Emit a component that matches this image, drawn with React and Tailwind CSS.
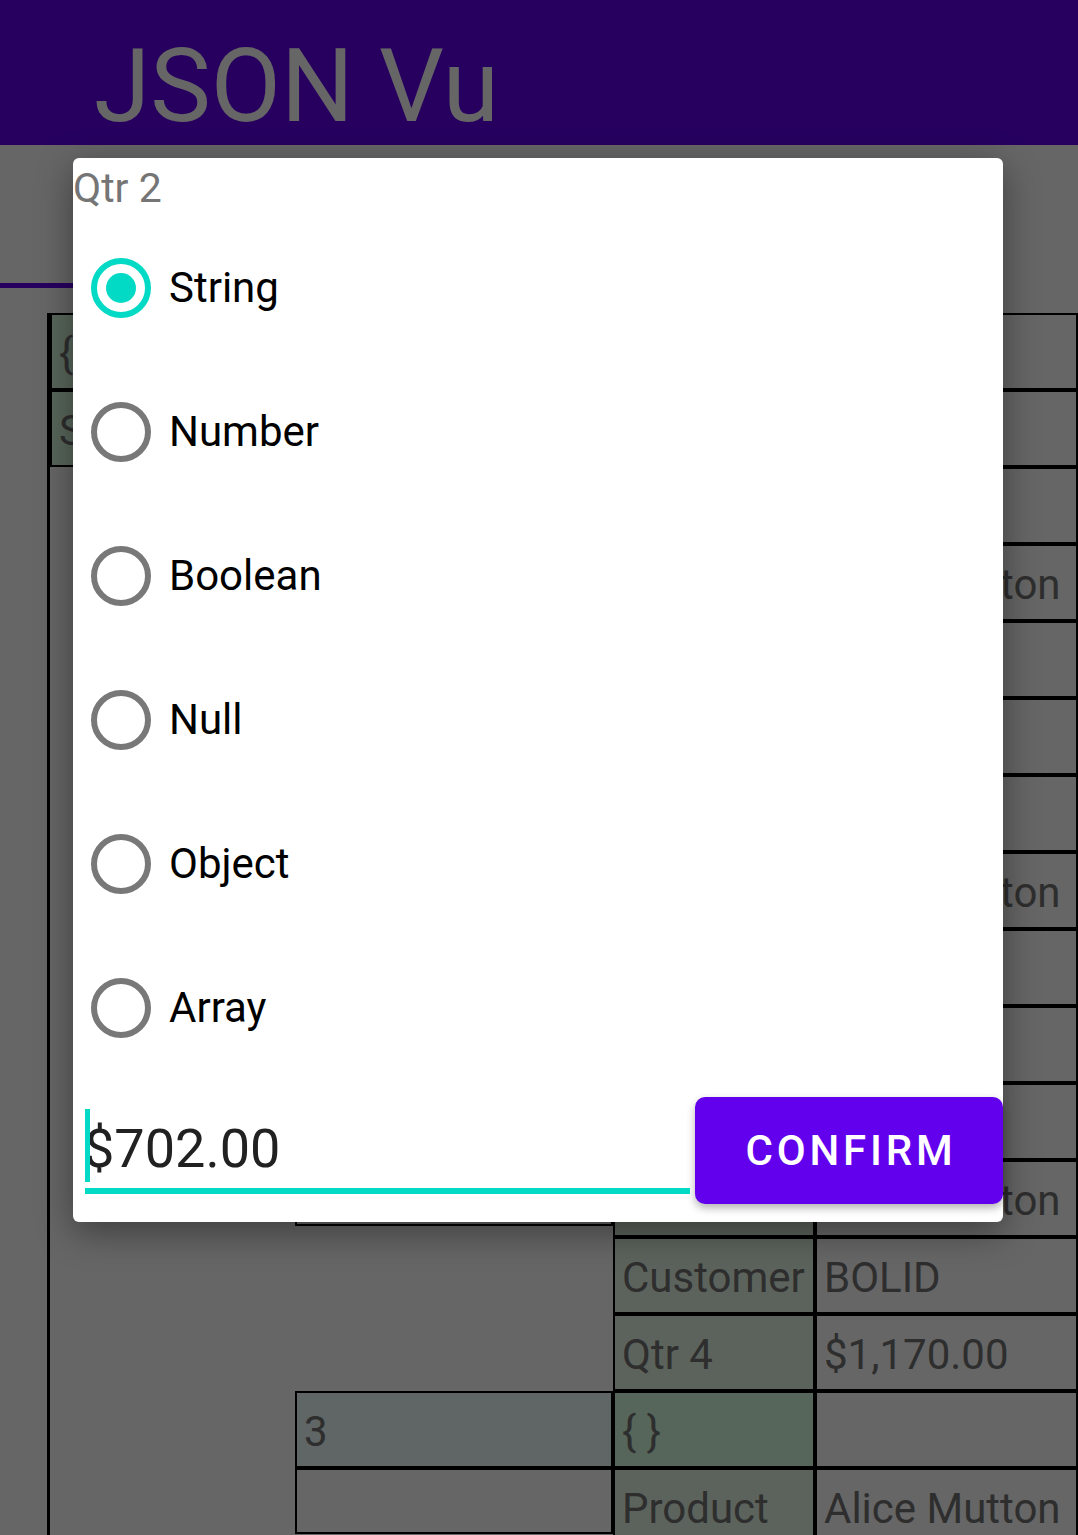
import React from "react";

const items = [
  { idx: "0", rows: [["Product", "Alice Mutton"], ["Customer", "ANTON"], ["Qtr 2", "$702.00"]] },
  { idx: "1", rows: [["Product", "Alice Mutton"], ["Customer", "BERGS"], ["Qtr 1", "$312.00"]] },
  { idx: "2", rows: [["Product", "Alice Mutton"], ["Customer", "BOLID"], ["Qtr 4", "$1,170.00"]] },
  { idx: "3", rows: [["Product", "Alice Mutton"], ["Customer", "BOTTM"], ["Qtr 1", "$1,170.00"]] },
];

const types = ["String", "Number", "Boolean", "Null", "Object", "Array"];

function Cell({ children, className = "" }) {
  return (
    <div
      className={
        "flex h-[77px] shrink-0 items-center overflow-hidden whitespace-nowrap border-2 border-black px-[7px] pt-[5px] text-[42px] leading-none text-[#737373] " +
        className
      }
    >
      {children}
    </div>
  );
}

function Radio({ label, checked }) {
  return (
    <div className="flex h-[144px] items-center pl-[18px]">
      <div
        className={
          "flex h-[60px] w-[60px] items-center justify-center rounded-full border-[6px] " +
          (checked ? "border-[#03DAC5]" : "border-[#787878]")
        }
      >
        {checked && <div className="h-[30px] w-[30px] rounded-full bg-[#03DAC5]" />}
      </div>
      <span className="ml-[18px] text-[42px] leading-none text-black">{label}</span>
    </div>
  );
}

export default function App() {
  return (
    <div className="relative flex h-[1535px] w-full flex-col overflow-hidden bg-white font-['Roboto',sans-serif]">
      {/* App bar */}
      <div className="h-[145px] shrink-0 bg-[#6200EE] pl-[94px] pt-[35px]">
        <div className="text-[102px] leading-none text-white">JSON Vu</div>
      </div>

      {/* Tab strip */}
      <div className="flex h-[143px] shrink-0 flex-col justify-end">
        <div className="h-[5px] w-[500px] bg-[#6200EE]" />
      </div>

      {/* Table */}
      <div className="ml-[47px] mt-[25px] flex flex-1 flex-col border-l-[3px] border-black">
        <div className="flex">
          <Cell className="w-[245px] bg-[#DCFFE2]">{"{"}</Cell>
          <Cell className="flex-1 bg-white" />
        </div>
        <div className="flex">
          <Cell className="w-[245px] bg-[#DCFFE2]">Sales</Cell>
          <Cell className="flex-1 bg-white" />
        </div>
        {items.map((it) => (
          <div key={it.idx} className="flex h-[308px] shrink-0">
            <div className="w-[245px] shrink-0" />
            <div className="flex w-[318px] shrink-0 flex-col">
              <Cell className="bg-[#EEFFFD]">{it.idx}</Cell>
              <div className="h-[66px] border-2 border-black bg-white" />
            </div>
            <div className="flex flex-1 flex-col">
              <div className="flex">
                <Cell className="w-[202px] bg-[#D8FFE1]">{"{ }"}</Cell>
                <Cell className="flex-1 bg-white" />
              </div>
              {it.rows.map(([k, v]) => (
                <div key={k} className="flex">
                  <Cell className="w-[202px] bg-[#E6F8E6]">{k}</Cell>
                  <Cell className="flex-1 bg-white">{v}</Cell>
                </div>
              ))}
            </div>
          </div>
        ))}
      </div>

      {/* Scrim */}
      <div className="absolute inset-0 bg-black/60" />

      {/* Dialog */}
      <div className="absolute left-[73px] top-[158px] flex h-[1064px] w-[930px] flex-col rounded-[6px] bg-white shadow-[0_10px_36px_rgba(0,0,0,0.4)]">
        <div className="pt-[10px] text-[41px] leading-[40px] text-[#757575]">Qtr 2</div>
        <div className="mt-[8px] flex flex-col">
          {types.map((t, i) => (
            <Radio key={t} label={t} checked={i === 0} />
          ))}
        </div>
        <div className="mt-[17px] flex items-start">
          <div className="relative ml-[12px] h-[97px] w-[605px] border-b-[6px] border-[#03DAC5]">
            <div className="absolute left-0 top-[12px] h-[73px] w-[5px] bg-[#03DAC5]" />
            <div className="-ml-[1px] pt-[25px] text-[54px] leading-none text-[#212121]">$702.00</div>
          </div>
          <button className="ml-[5px] flex h-[107px] w-[308px] items-center justify-center rounded-[10px] bg-[#6200EE] pl-[4px] text-[42px] font-medium leading-none tracking-[0.09em] text-white shadow-[0_4px_8px_rgba(0,0,0,0.3)]">
            CONFIRM
          </button>
        </div>
      </div>
    </div>
  );
}
